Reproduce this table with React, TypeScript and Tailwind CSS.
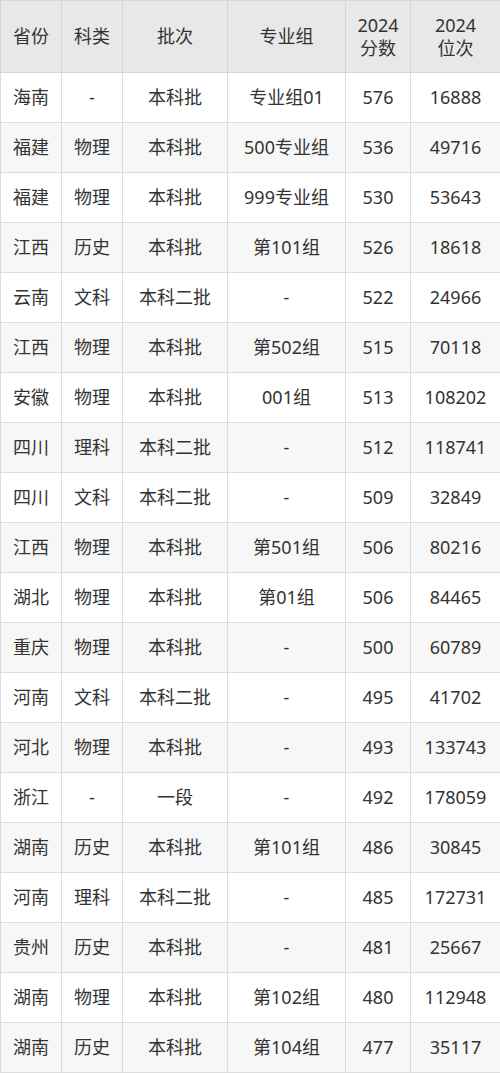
const rows: string[][] = [
  ["海南", "-", "本科批", "专业组01", "576", "16888"],
  ["福建", "物理", "本科批", "500专业组", "536", "49716"],
  ["福建", "物理", "本科批", "999专业组", "530", "53643"],
  ["江西", "历史", "本科批", "第101组", "526", "18618"],
  ["云南", "文科", "本科二批", "-", "522", "24966"],
  ["江西", "物理", "本科批", "第502组", "515", "70118"],
  ["安徽", "物理", "本科批", "001组", "513", "108202"],
  ["四川", "理科", "本科二批", "-", "512", "118741"],
  ["四川", "文科", "本科二批", "-", "509", "32849"],
  ["江西", "物理", "本科批", "第501组", "506", "80216"],
  ["湖北", "物理", "本科批", "第01组", "506", "84465"],
  ["重庆", "物理", "本科批", "-", "500", "60789"],
  ["河南", "文科", "本科二批", "-", "495", "41702"],
  ["河北", "物理", "本科批", "-", "493", "133743"],
  ["浙江", "-", "一段", "-", "492", "178059"],
  ["湖南", "历史", "本科批", "第101组", "486", "30845"],
  ["河南", "理科", "本科二批", "-", "485", "172731"],
  ["贵州", "历史", "本科批", "-", "481", "25667"],
  ["湖南", "物理", "本科批", "第102组", "480", "112948"],
  ["湖南", "历史", "本科批", "第104组", "477", "35117"],
];

const widths = ["w-[61px]", "w-[61px]", "w-[105px]", "w-[118px]", "w-[65px]", "w-[90px]"];

export default function App() {
  return (
    <div className="w-[500px] bg-white text-[#333] text-[18px] font-['Noto_Sans','Noto_Sans_CJK_SC',sans-serif]">
      <table className="w-[500px] table-fixed border-collapse">
        <colgroup>
          {widths.map((w, i) => (
            <col key={i} className={w} />
          ))}
        </colgroup>
        <thead>
          <tr className="h-[72px] bg-[#e8e8e8]">
            {["省份", "科类", "批次", "专业组"].map((h) => (
              <th key={h} className="border border-[#d6d6d6] font-normal text-center">
                {h}
              </th>
            ))}
            <th className="border border-[#d6d6d6] font-normal text-center leading-[23px]">
              2024
              <br />
              分数
            </th>
            <th className="border border-[#d6d6d6] font-normal text-center leading-[23px]">
              2024
              <br />
              位次
            </th>
          </tr>
        </thead>
        <tbody>
          {rows.map((r, i) => (
            <tr key={i} className={`h-[50px] ${i % 2 === 1 ? "bg-[#f7f7f7]" : "bg-white"}`}>
              {r.map((c, j) => (
                <td key={j} className="border border-[#dcdcdc] text-center p-0">
                  {c}
                </td>
              ))}
            </tr>
          ))}
        </tbody>
      </table>
    </div>
  );
}
